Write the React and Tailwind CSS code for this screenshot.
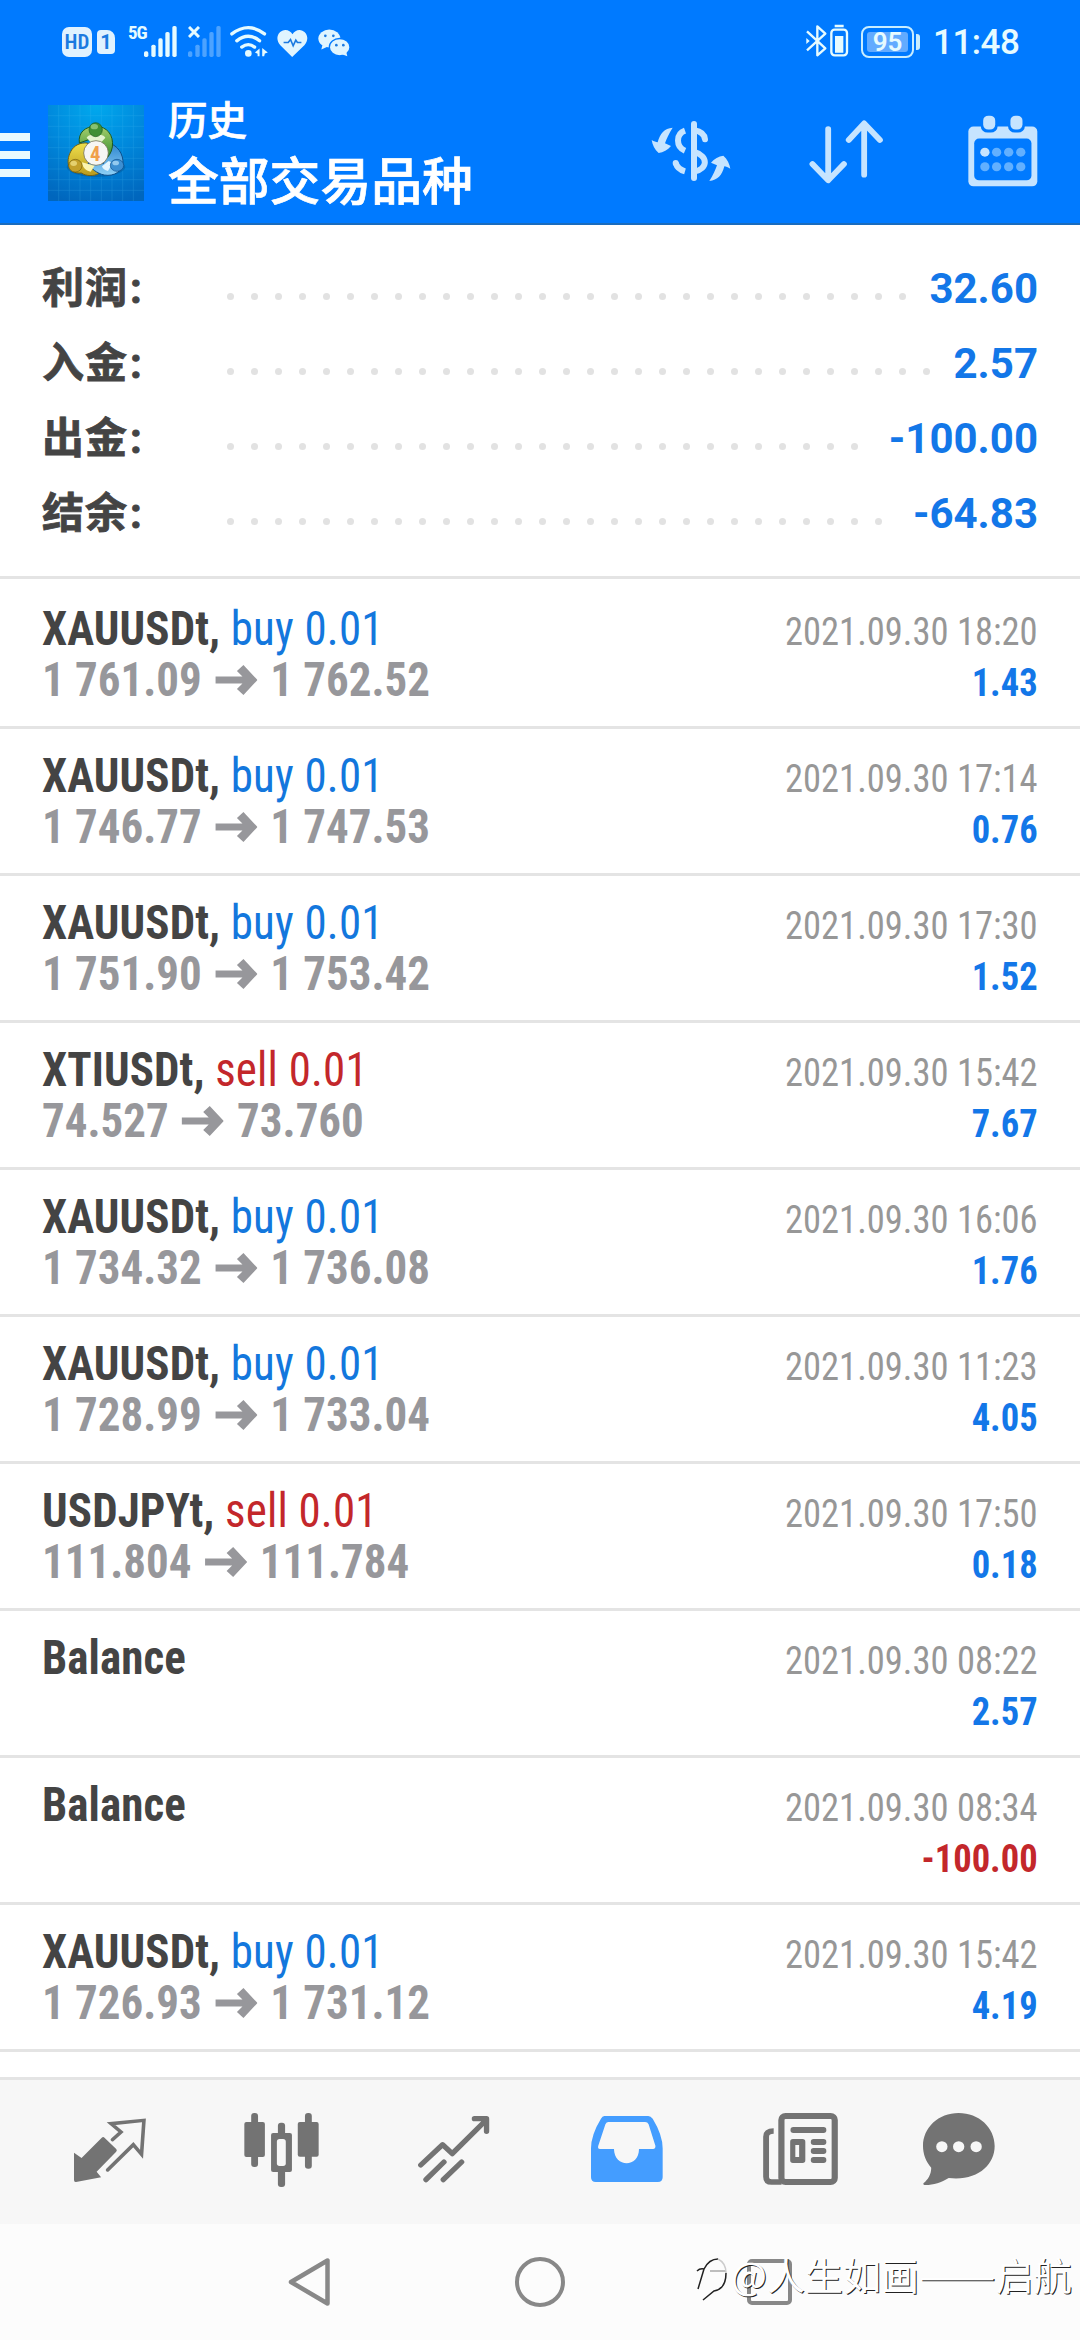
// ─────────────────────────────────────────────────────────────────────────────
// App.jsx
//
// Trade history screen: status bar, header, account summary, list of deals,
// tab bar and the system navigation keys.
// ─────────────────────────────────────────────────────────────────────────────

const SUMMARY = [
  { label: '利润:', value: '32.60', dots: 29 },
  { label: '入金:', value: '2.57', dots: 30 },
  { label: '出金:', value: '-100.00', dots: 27 },
  { label: '结余:', value: '-64.83', dots: 28 },
]

const DEALS = [
  { symbol: 'XAUUSDt', side: 'buy', volume: '0.01', open: '1 761.09', close: '1 762.52', time: '2021.09.30 18:20', profit: '1.43' },
  { symbol: 'XAUUSDt', side: 'buy', volume: '0.01', open: '1 746.77', close: '1 747.53', time: '2021.09.30 17:14', profit: '0.76' },
  { symbol: 'XAUUSDt', side: 'buy', volume: '0.01', open: '1 751.90', close: '1 753.42', time: '2021.09.30 17:30', profit: '1.52' },
  { symbol: 'XTIUSDt', side: 'sell', volume: '0.01', open: '74.527', close: '73.760', time: '2021.09.30 15:42', profit: '7.67' },
  { symbol: 'XAUUSDt', side: 'buy', volume: '0.01', open: '1 734.32', close: '1 736.08', time: '2021.09.30 16:06', profit: '1.76' },
  { symbol: 'XAUUSDt', side: 'buy', volume: '0.01', open: '1 728.99', close: '1 733.04', time: '2021.09.30 11:23', profit: '4.05' },
  { symbol: 'USDJPYt', side: 'sell', volume: '0.01', open: '111.804', close: '111.784', time: '2021.09.30 17:50', profit: '0.18' },
  { symbol: 'Balance', time: '2021.09.30 08:22', profit: '2.57' },
  { symbol: 'Balance', time: '2021.09.30 08:34', profit: '-100.00' },
  { symbol: 'XAUUSDt', side: 'buy', volume: '0.01', open: '1 726.93', close: '1 731.12', time: '2021.09.30 15:42', profit: '4.19' },
]

// ── Status bar ──

function SignalBars({ className }) {
  return (
    <svg viewBox="0 0 99 93" className={className} fill="currentColor">
      <rect x="0" y="76" width="13" height="17" rx="5" />
      <rect x="22" y="56" width="13" height="37" rx="5" />
      <rect x="43" y="37" width="13" height="56" rx="5" />
      <rect x="64" y="18" width="13" height="75" rx="5" />
      <rect x="85" y="0" width="13" height="93" rx="5" />
    </svg>
  )
}

function StatusBar() {
  return (
    <div className="h-[82px] pl-[62px] pr-[61px] flex items-center justify-between text-[#e6fbff]">
      <div className="h-[34px] flex items-start">
        <span className="mt-[3px] w-[30px] h-[30px] rounded-[7px] bg-[#e0f2ff] text-[#1b7ae0] text-[21px] leading-[31px] font-semibold font-['Roboto_Condensed'] text-center">
          HD
        </span>
        <span className="mt-[6px] ml-[5px] w-[18px] h-[24px] rounded-[4px] rounded-tr-[8px] bg-[#e0f2ff] text-[#1b7ae0] text-[20px] leading-[25px] font-bold font-['Roboto'] text-center">
          1
        </span>
        <span className="ml-[13px] w-[16px] text-[19px] leading-[17px] font-bold font-['Roboto_Condensed'] tracking-[-1px]">
          5G
        </span>
        <SignalBars className="mt-[2px] w-[33px] h-[31px]" />
        <div className="relative ml-[11px] mt-[2px]">
          <SignalBars className="w-[33px] h-[31px] text-[#4da3ff]" />
          <svg viewBox="0 0 36 36" className="absolute left-0 top-0 w-[12px] h-[12px]" stroke="#e6fbff" strokeWidth="9">
            <path d="M3 3L33 33M33 3L3 33" />
          </svg>
        </div>
        <svg viewBox="540 26 120 100" className="ml-[8px] mt-[1px] w-[40px] h-[33px]" fill="none" stroke="currentColor" strokeWidth="10" strokeLinecap="round">
          <path d="M548 53Q598 15 647 53" />
          <path d="M563 74Q598 46 632 74" />
          <path d="M578 93Q598 78 617 93" />
          <circle cx="598" cy="112" r="10" fill="currentColor" stroke="none" />
          <path d="M632 97V121H626V113L618 109ZM640 96L657 109L648 112L646 121H640Z" fill="currentColor" stroke="none" />
        </svg>
        <svg viewBox="680 37 94 86" className="ml-[8px] mt-[5px] w-[31px] h-[29px]">
          <path d="M726 121L690 85C676 70 679 48 696 41C709 36 721 42 727 52C733 42 745 36 757 41C774 48 777 70 763 85Z" fill="#e0f5ff" />
          <path d="M700 77H714L721 68L729 87L737 70L742 77H754" fill="none" stroke="#1b7ae0" strokeWidth="5" />
        </svg>
        <svg viewBox="804 37 96 86" className="ml-[10px] mt-[5px] w-[32px] h-[29px]">
          <path d="M818 82L814 98L832 90Z" fill="#e0f5ff" />
          <ellipse cx="838" cy="65" rx="33" ry="27" fill="#e0f5ff" />
          <ellipse cx="869" cy="91" rx="31" ry="26" fill="#e0f5ff" stroke="#007aff" strokeWidth="4" />
          <path d="M876 112L892 118L889 106Z" fill="#e0f5ff" />
          <circle cx="826" cy="57" r="4" fill="#1b7ae0" />
          <circle cx="850" cy="57" r="4" fill="#1b7ae0" />
          <circle cx="859" cy="85" r="4" fill="#1b7ae0" />
          <circle cx="880" cy="85" r="4" fill="#1b7ae0" />
        </svg>
      </div>

      <div className="h-[34px] flex items-start">
        <svg viewBox="45 24 63 102" className="w-[21px] h-[34px]" fill="none" stroke="currentColor" strokeWidth="7" strokeLinejoin="round">
          <path d="M48 46L103 97L79 118V31L103 53L48 103" />
          <path d="M46 66L56 75L46 84Z" fill="currentColor" stroke="none" />
        </svg>
        <svg viewBox="120 24 57 102" className="ml-[3px] w-[19px] h-[34px]">
          <rect x="124" y="41" width="47" height="77" rx="10" fill="none" stroke="currentColor" strokeWidth="7" />
          <path d="M134 26H161V34H134ZM135 60H160V110H135Z" fill="currentColor" />
        </svg>
        <div className="mt-[2px] ml-[12px] w-[53px] h-[32px] p-[4px] rounded-[8px] border-[2.5px] border-[#c8edff]">
          <div className="w-full h-full rounded-[3px] bg-[#62abff] flex items-center justify-center text-[26px] leading-none font-semibold font-['Roboto']">
            95
          </div>
        </div>
        <span className="mt-[10px] ml-[2px] w-[4px] h-[16px] rounded-r-[3px] bg-[#c8edff]" />
        <span className="ml-[13px] w-[86px] text-[35px] leading-[37px] font-medium font-['Roboto'] tracking-[-0.5px]">11:48</span>
      </div>
    </div>
  )
}

// ── Header ──

function AppLogo() {
  return (
    <svg viewBox="24 14 288 288" className="w-24 h-24">
      <defs>
        <radialGradient id="sky" cx="0.5" cy="0" r="1.05">
          <stop offset="0" stopColor="#00a9ee" />
          <stop offset="0.5" stopColor="#0088dc" />
          <stop offset="1" stopColor="#0066bd" />
        </radialGradient>
        <linearGradient id="green" x1="0" y1="0" x2="0" y2="1">
          <stop offset="0" stopColor="#a6cf6d" />
          <stop offset="1" stopColor="#2f8a2c" />
        </linearGradient>
        <linearGradient id="yellow" x1="0" y1="0" x2="0" y2="1">
          <stop offset="0" stopColor="#efe04c" />
          <stop offset="1" stopColor="#b99a1d" />
        </linearGradient>
        <linearGradient id="blue" x1="0" y1="0" x2="0" y2="1">
          <stop offset="0" stopColor="#2d86cf" />
          <stop offset="1" stopColor="#8fd0f6" />
        </linearGradient>
      </defs>
      <path d="M24 14H312V302H24Z" fill="url(#sky)" />
      <path
        d="M56 14V302M88 14V302M120 14V302M152 14V302M184 14V302M216 14V302M248 14V302M280 14V302M24 46H312M24 78H312M24 110H312M24 142H312M24 174H312M24 206H312M24 238H312M24 270H312"
        stroke="#4fc0f5"
        strokeWidth="1.5"
        opacity="0.35"
      />
      <ellipse cx="168" cy="200" rx="88" ry="30" fill="#00508f" opacity="0.4" />
      <path d="M124 218C84 222 76 184 92 154C102 134 122 126 142 128L150 190L176 220C160 228 140 228 124 218Z" fill="url(#yellow)" stroke="#75600f" strokeWidth="3" />
      <path d="M212 130C240 140 256 176 246 200C234 228 196 230 176 218C158 210 148 196 144 188L190 190Z" fill="url(#blue)" stroke="#0e4f8c" strokeWidth="3" />
      <path d="M118 128C114 96 136 78 168 78C200 78 222 104 217 140C214 158 206 168 196 178L188 130L146 118Z" fill="url(#green)" stroke="#1c5a20" strokeWidth="3" />
      <path d="M140 112L154 128H182L196 112C190 98 146 98 140 112Z" fill="#e3f3cf" />
      <path d="M126 186C128 204 140 212 152 214L164 196Z" fill="#fbf5b0" />
      <path d="M186 198L206 182L218 188L204 212C194 210 188 206 186 198Z" fill="#e4f6ff" />
      <ellipse cx="167" cy="88" rx="20" ry="21" fill="#3f8f35" stroke="#1c5a20" strokeWidth="2" />
      <ellipse cx="163" cy="79" rx="11" ry="8" fill="#a5d58c" opacity="0.7" />
      <ellipse cx="106" cy="196" rx="20" ry="19" fill="#c3a02a" stroke="#75600f" strokeWidth="2" />
      <ellipse cx="101" cy="189" rx="10" ry="8" fill="#f4e68d" opacity="0.7" />
      <ellipse cx="231" cy="195" rx="20" ry="18" fill="#3c8fd2" stroke="#0e4f8c" strokeWidth="2" />
      <ellipse cx="227" cy="188" rx="10" ry="7" fill="#b9e2fb" opacity="0.7" />
      <circle cx="168" cy="158" r="37" fill="#f7f6f3" stroke="#5c5a3c" strokeWidth="2" />
      <text x="166" y="181" textAnchor="middle" fontSize="62" fontWeight="700" fontFamily="Roboto Condensed" fill="#f0a04b">
        4
      </text>
    </svg>
  )
}

function CurrencyIcon() {
  return (
    <svg viewBox="30 30 240 186" className="w-[80px] h-[62px]" fill="none" stroke="#c6e4ff" strokeWidth="18">
      <rect x="150" y="33" width="18" height="180" rx="9" fill="#c6e4ff" stroke="none" />
      <path d="M132 62C104 72 104 110 132 122" />
      <path d="M160 61C178 64 190 72 192 88" strokeLinecap="round" />
      <path d="M160 126C202 138 202 176 160 185" />
      <path d="M104 159C108 172 118 180 132 184" />
      <circle cx="104" cy="159" r="9" fill="#c6e4ff" stroke="none" />
      <g fill="#c6e4ff" stroke="none">
        <path d="M95 53C84 70 76 88 72 100L90 108C80 121 67 127 53 129C41 119 34 104 32 90C39 94 45 96 50 97C57 70 70 55 95 53Z" />
        <path d="M95 53C84 70 76 88 72 100L90 108C80 121 67 127 53 129C41 119 34 104 32 90C39 94 45 96 50 97C57 70 70 55 95 53Z" transform="rotate(180 150 133)" />
      </g>
    </svg>
  )
}

function SortIcon() {
  return (
    <svg viewBox="780 362 216 192" preserveAspectRatio="none" className="w-[74px] h-[64px]" fill="none" stroke="#c6e4ff" strokeWidth="17" strokeLinecap="round" strokeLinejoin="round">
      <path d="M836 389V540M790 494L836 543L882 494" />
      <path d="M941 526V376M896 422L941 372L987 422" />
    </svg>
  )
}

function CalendarIcon() {
  return (
    <svg viewBox="1242 346 203 217" preserveAspectRatio="none" className="w-[70px] h-[72px]">
      <rect x="1243" y="381" width="200" height="180" rx="15" fill="#c6e4ff" />
      <rect x="1260" y="417" width="166" height="126" rx="14" fill="#007aff" />
      <rect x="1279" y="342" width="49" height="57" rx="20" fill="#007aff" />
      <rect x="1358" y="342" width="49" height="57" rx="20" fill="#007aff" />
      <rect x="1286" y="348" width="35" height="42" rx="15" fill="#c6e4ff" />
      <rect x="1365" y="348" width="35" height="42" rx="15" fill="#c6e4ff" />
      <g fill="#62b0ff">
        <circle cx="1291" cy="458" r="13.5" fill="#c6e4ff" />
        <circle cx="1325" cy="458" r="13.5" />
        <circle cx="1360" cy="458" r="13.5" />
        <circle cx="1395" cy="458" r="13.5" />
        <circle cx="1291" cy="502" r="13.5" />
        <circle cx="1325" cy="502" r="13.5" />
        <circle cx="1360" cy="502" r="13.5" />
        <circle cx="1395" cy="502" r="13.5" />
      </g>
    </svg>
  )
}

function Header() {
  return (
    <header className="h-[225px] shrink-0 bg-[#007aff] border-b-2 border-[#1a6cbd]">
      <StatusBar />
      <div className="h-[141px] flex items-start">
        <button className="mt-[51px] w-[30px] flex flex-col gap-[10px]" aria-label="Menu">
          <span className="h-2 w-full bg-[#e8faff]" />
          <span className="h-2 w-full bg-[#e8faff]" />
          <span className="h-2 w-full bg-[#e8faff]" />
        </button>
        <div className="mt-[23px] ml-[18px]">
          <AppLogo />
        </div>
        <div className="mt-[10px] ml-[24px] w-[483px] font-medium font-['Noto_Sans_CJK_SC',sans-serif] text-white [-webkit-text-stroke:0.7px_white]">
          <p className="text-[39.5px] leading-[52px]">历史</p>
          <p className="text-[50.8px] leading-[69px]">全部交易品种</p>
        </div>
        <div className="mt-[38px]">
          <CurrencyIcon />
        </div>
        <div className="mt-[38px] ml-[78px]">
          <SortIcon />
        </div>
        <div className="mt-[33px] ml-[85px]">
          <CalendarIcon />
        </div>
      </div>
    </header>
  )
}

// ── Summary ──

function SummaryRow({ label, value, dots }) {
  return (
    <div className="h-[75px] flex items-center">
      <span className="-mt-px w-[185px] text-[42px] leading-[75px] font-bold font-['Roboto','Noto_Sans_CJK_SC',sans-serif] tracking-[1px] text-[#444] [-webkit-text-stroke:0.8px_#444]">
        {label.slice(0, -1)}
        <span className="ml-[2px]">{label.slice(-1)}</span>
      </span>
      <div className="mt-[16px] flex gap-[17px]">
        {Array.from({ length: dots }, (_, i) => (
          <span key={i} className="size-[7px] rounded-full bg-[#e2e2e2]" />
        ))}
      </div>
      <span className="ml-auto text-[42px] font-bold font-['Roboto'] text-[#1377e8]">{value}</span>
    </div>
  )
}

// ── Deals ──

function PriceArrow() {
  return (
    <svg viewBox="0 0 42 30" preserveAspectRatio="none" className="w-[45px] h-[30px]" fill="#97979b">
      <path d="M0 11.500H27L21.500 6L28 0L42 15L28 30L21.500 24L27 18.500H0Z" />
    </svg>
  )
}

function DealRow({ deal }) {
  const sideColor = deal.side === 'sell' ? 'text-[#c3272b]' : 'text-[#1377dd]'
  const profitColor = deal.profit.startsWith('-') ? 'text-[#c3272b]' : 'text-[#1377e8]'

  return (
    <li className="h-[147px] px-[42px] pt-[21px] border-b-[3px] border-[#e4e4e4] flex justify-between font-['Roboto_Condensed'] first:h-[150px] first:pt-[24px]">
      <div className="text-[48px] leading-[51px] whitespace-nowrap origin-left scale-x-[0.937]">
        <p>
          <span className="font-bold text-[#444] tracking-[0.1px]">
            {deal.symbol}
            {deal.side && ','}
          </span>
          {deal.side && <span className={`tracking-[0.2px] ${sideColor}`}> {deal.side} {deal.volume}</span>}
        </p>
        {deal.open && (
          <p className="flex items-center font-bold text-[#97979b]">
            <span>{deal.open}</span>
            <span className="mx-[14px]">
              <PriceArrow />
            </span>
            <span>{deal.close}</span>
          </p>
        )}
      </div>
      <div className="pt-[4px] text-[39px] leading-[51px] text-right origin-right scale-x-[0.937]">
        <p className="text-[#979797]">{deal.time}</p>
        <p className={`font-bold ${profitColor}`}>{deal.profit}</p>
      </div>
    </li>
  )
}

// ── Tab bar ──

function TabBar() {
  return (
    <nav className="h-[147px] shrink-0 pt-[30px] pl-[74px] border-t-[3px] border-[#e4e4e4] bg-[#f7f7f7] flex items-start text-[#737373]">
      <svg viewBox="215 210 210 240" preserveAspectRatio="none" className="w-[72px] h-[80px]" fill="currentColor">
        <path d="M215 338L237 354L296 293Q300 289 304 293L338 327Q342 331 338 335L281 395L294 412L221 426Q215 427 215 420Z" />
        <path d="M327 299L352 276L323 251L419 241L412 343L388 314L313 390" fill="none" stroke="currentColor" strokeWidth="10.500" strokeLinecap="round" />
      </svg>
      <svg viewBox="708 210 219 240" preserveAspectRatio="none" className="ml-[98px] w-[75px] h-[80px]" fill="currentColor">
        <rect x="729" y="219" width="20" height="162" rx="9" />
        <rect x="709" y="246" width="60" height="105" rx="6" />
        <rect x="886" y="219" width="20" height="167" rx="9" />
        <rect x="865" y="246" width="61" height="104" rx="6" />
        <rect x="807" y="248" width="21" height="193" rx="9" />
        <rect x="787" y="279" width="61" height="117" rx="6" />
        <rect x="804" y="297" width="26" height="81" rx="8" fill="#f7f7f7" />
      </svg>
      <svg viewBox="1213 210 208 240" preserveAspectRatio="none" className="ml-[99px] w-[72px] h-[80px]" fill="none" stroke="currentColor" strokeWidth="15.500" strokeLinecap="round" strokeLinejoin="round">
        <path d="M1221 375L1284 314L1312 341L1410 240M1376 236H1411V274" />
        <path d="M1236 419L1288 366M1286 419L1339 366" />
      </svg>
      <svg viewBox="147 210 210 240" preserveAspectRatio="none" className="ml-[101px] w-[72px] h-[80px]">
        <path d="M186 228H314Q321 228 327 236Q356 285 356 325V412Q356 426 342 426H161Q147 426 147 412V325Q147 285 176 236Q180 228 186 228Z" fill="#449dff" />
        <path d="M198 246H305Q312 246 315 253L335 318Q335 327 328 327H287C287 384 215 384 214 327H173Q166 327 168 318L189 253Q192 246 198 246Z" fill="#f7f7f7" />
      </svg>
      <svg viewBox="646 210 218 240" preserveAspectRatio="none" className="ml-[100px] w-[75px] h-[80px]" fill="none" stroke="currentColor" strokeWidth="18">
        <rect x="699.500" y="228" width="155" height="198" rx="12" />
        <path d="M677 273Q655 273 655 290V410Q655 426 671 426H700" strokeWidth="17" />
        <g fill="currentColor" stroke="none">
          <rect x="726" y="261" width="104" height="18" rx="8" />
          <path d="M733 297H761Q769 297 769 305V361Q769 369 761 369H733Q725 369 725 361V305Q725 297 733 297ZM740 315V351H751V315Z" fillRule="evenodd" />
          <rect x="785" y="297" width="45" height="18" rx="8" />
          <rect x="785" y="324" width="45" height="18" rx="8" />
          <rect x="785" y="351" width="45" height="18" rx="8" />
        </g>
      </svg>
      <svg viewBox="1109 210 210 240" preserveAspectRatio="none" className="ml-[85px] w-[72px] h-[80px]" fill="currentColor">
        <path d="M1213 219C1272 219 1318 263 1318 318C1318 376 1266 424 1184 414C1162 428 1136 436 1113 435Q1108 434 1111 429C1124 418 1133 403 1133 383C1117 364 1109 342 1109 318C1109 263 1154 219 1213 219Z" />
        <g fill="#f7f7f7">
          <circle cx="1164" cy="320" r="16.500" />
          <circle cx="1213" cy="320" r="16.500" />
          <circle cx="1264" cy="320" r="16.500" />
        </g>
      </svg>
    </nav>
  )
}

// ── System keys, with the poster's signature lying over them ──

function SystemBar() {
  return (
    <div className="relative h-[116px] shrink-0 pt-[33px] pl-[287px] bg-[#fcfcfc] flex items-start">
      <svg viewBox="0 0 44 50" className="w-[44px] h-[50px]" fill="none" stroke="#888" strokeWidth="4.500" strokeLinejoin="round">
        <path d="M40.500 3.500V46.500L4 25Z" />
      </svg>
      <span className="ml-[184px] size-[50px] rounded-full border-[4.500px] border-[#888]" />
      <span className="mt-[2px] ml-[182px] w-[45px] h-[46px] rounded-[5px] border-[4.500px] border-[#888]" />

      <div className="absolute left-[696px] top-[25px] flex items-start text-white">
        <svg viewBox="0 0 32 50" className="mt-[6px] w-[32px] h-[50px]" fill="none" strokeWidth="1.500">
          <path d="M1 16Q4 13 8 14Q13 4 22 4M8 14L2 34M30 18Q30 34 18 36L7 45" stroke="#222" />
          <path d="M14 16H30" stroke="#aaa" />
          <path d="M22 4Q30 8 30 18" stroke="#ccc" />
        </svg>
        <div className="ml-[3px] flex text-[38px] leading-[50px] whitespace-nowrap font-['Noto_Sans_CJK_SC',sans-serif] [text-shadow:1px_1px_0_#222]">
          <span>@人生如画</span>
          <span className="mr-[13px] origin-left scale-x-[1.2]">——</span>
          <span>启航</span>
        </div>
      </div>
    </div>
  )
}

export default function App() {
  return (
    <div className="w-[1080px] h-[2340px] overflow-hidden bg-white flex flex-col">
      <Header />
      <section className="h-[354px] shrink-0 pt-[26px] px-[42px] border-b-[3px] border-[#e4e4e4]">
        {SUMMARY.map((row) => (
          <SummaryRow key={row.label} {...row} />
        ))}
      </section>
      <ul className="flex-1 overflow-hidden">
        {DEALS.map((deal, i) => (
          <DealRow key={i} deal={deal} />
        ))}
      </ul>
      <TabBar />
      <SystemBar />
    </div>
  )
}
